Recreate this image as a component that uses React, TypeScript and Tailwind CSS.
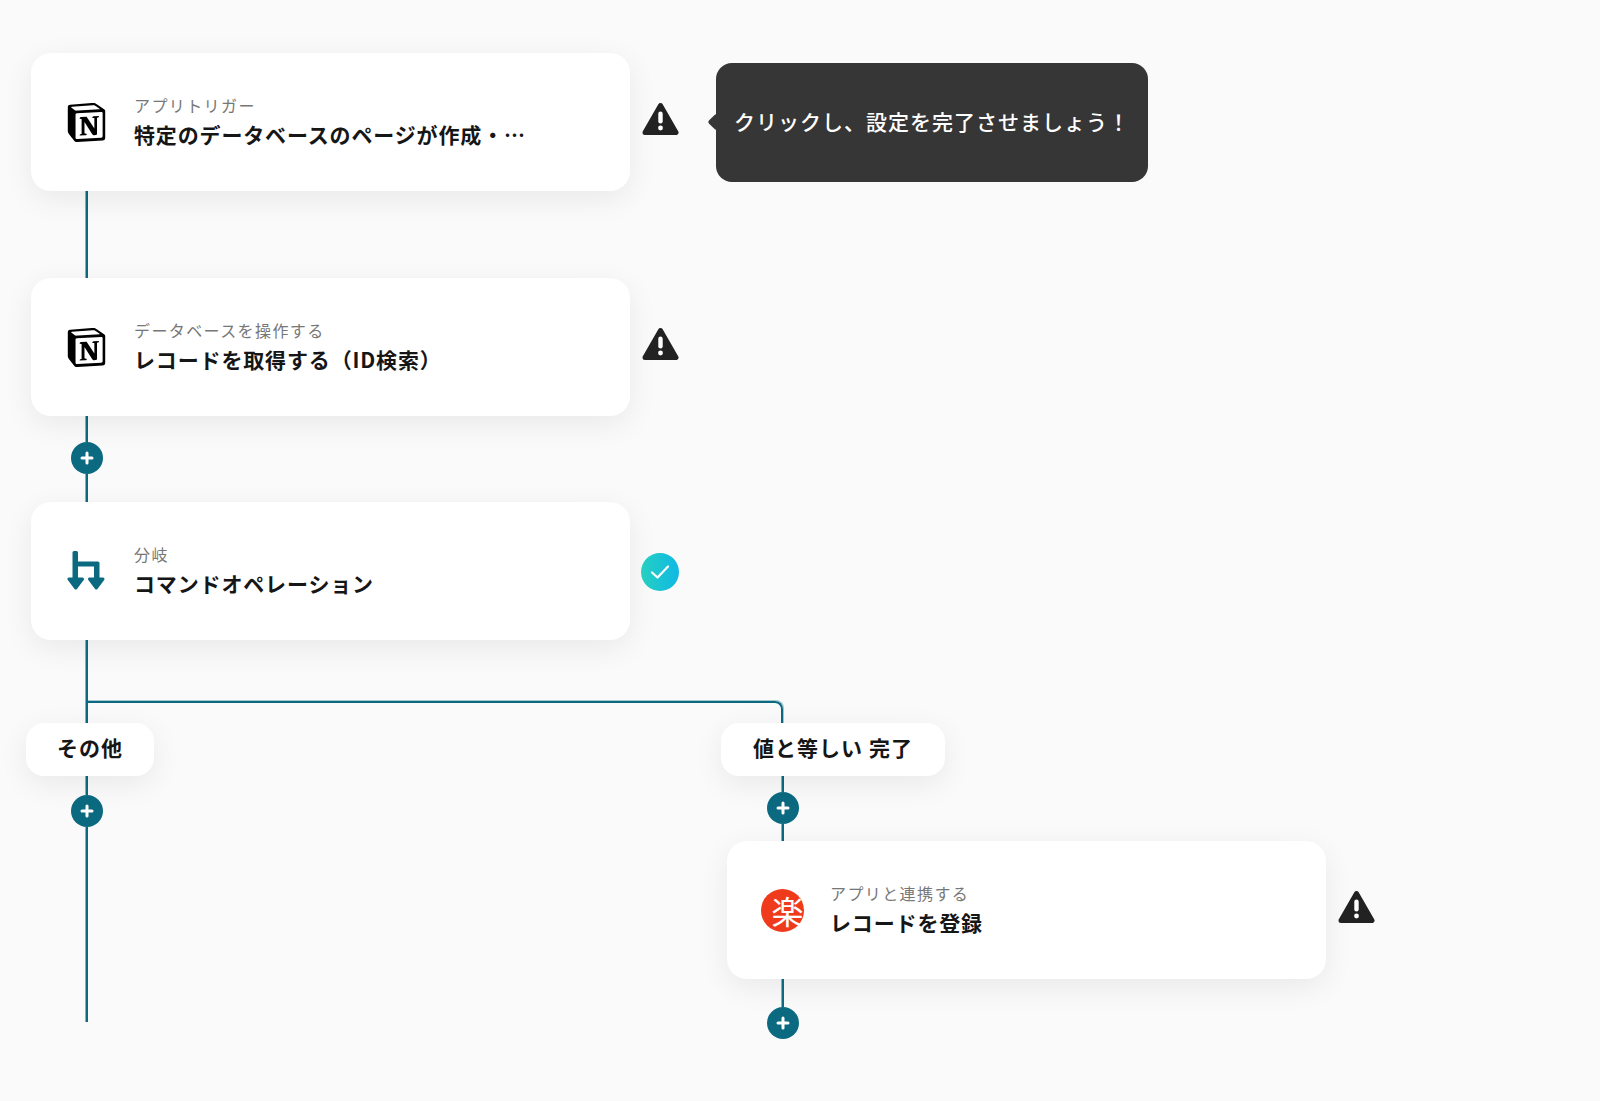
import { SiNotion } from "react-icons/si";

const font = { fontFamily: '"Noto Sans CJK JP", "Noto Sans", sans-serif' };

function Warn() {
  return (
    <svg width="37" height="34" viewBox="0 0 37 34" className="block">
      <path d="M18.5 3.5 L34 30.5 L3 30.5 Z" fill="#222222" stroke="#222222" strokeWidth="5" strokeLinejoin="round" />
      <rect x="16.3" y="9.5" width="4.4" height="12" rx="2.2" fill="#ffffff" />
      <circle cx="18.5" cy="26" r="2.4" fill="#ffffff" />
    </svg>
  );
}

function Plus() {
  return (
    <div className="ml-[40px] flex h-[32px] w-[32px] items-center justify-center rounded-full bg-[#0b6a80]">
      <svg width="14" height="14" viewBox="0 0 14 14">
        <path d="M7 2 V12 M2 7 H12" stroke="#ffffff" strokeWidth="3" strokeLinecap="round" />
      </svg>
    </div>
  );
}

function Line({ h }: { h: string }) {
  return <div className={`ml-[55px] w-[2px] bg-[#0b6a80] shadow-[-1px_0_0_rgba(11,106,128,0.5)] ${h}`} />;
}

function BranchIcon() {
  return (
    <svg width="38" height="40" viewBox="0 0 38 40" className="block" fill="#0b6a80">
      <path d="M5.5 1.5 Q5.5 0 7 0 H9.5 Q11 0 11 1.5 V10.5 H31 Q32.5 10.5 32.5 12 V29 H27 V15.5 H11 V29 H5.5 Z" />
      <path d="M2 28 H15.5 L8.75 37 Z" stroke="#0b6a80" strokeWidth="3" strokeLinejoin="round" />
      <path d="M22.5 28 H36 L29.25 37 Z" stroke="#0b6a80" strokeWidth="3" strokeLinejoin="round" />
    </svg>
  );
}

function Notion() {
  return <SiNotion className="ml-[1px] block h-[39px] w-[39px] text-black" />;
}

function Rakuten() {
  return (
    <div className="ml-[1px] flex h-[43px] w-[43px] items-center justify-center rounded-full bg-[#f03a1c]">
      <span className="ml-[10px] text-[32px] leading-none text-white" style={font}>楽</span>
    </div>
  );
}

function Card({ icon, sub, title }: { icon: React.ReactNode; sub: string; title: string }) {
  return (
    <div className="flex h-[138px] w-[599px] shrink-0 items-center rounded-[20px] bg-white shadow-[0_8px_30px_rgba(0,0,0,0.07)]">
      <div className="flex w-[110px] shrink-0 justify-center">{icon}</div>
      <div className="-ml-[7px] flex flex-col pb-[3px]">
        <div className="text-[16px] leading-[24px] tracking-[1.4px] text-[#777777]">{sub}</div>
        <div className="mt-[2px] text-[21px] leading-[30px] font-semibold tracking-[0.85px] text-[#161616]">{title}</div>
      </div>
    </div>
  );
}

function Pill({ text, w }: { text: string; w: string }) {
  return (
    <div className={`relative z-10 flex h-[53px] items-center justify-center rounded-[18px] bg-white pb-[3px] text-[21px] font-semibold tracking-[1px] text-[#161616] shadow-[0_8px_30px_rgba(0,0,0,0.07)] ${w}`}>
      {text}
    </div>
  );
}

export default function App() {
  return (
    <div className="h-[1101px] w-full overflow-hidden bg-[#fafafa] pt-[53px] pl-[31px]" style={font}>
      <div className="flex items-start">
        <Card icon={<Notion />} sub="アプリトリガー" title="特定のデータベースのページが作成・…" />
        <div className="mt-[49px] ml-[12px]"><Warn /></div>
        <div className="relative mt-[10px] ml-[37px] flex h-[119px] w-[432px] items-center justify-center rounded-[16px] bg-[#363636] pb-[2px] text-[21px] font-medium tracking-[1px] text-white">
          <div className="absolute top-[53px] left-[-6px] h-[12px] w-[12px] rotate-45 rounded-[2px] bg-[#363636]" />
          クリックし、設定を完了させましょう！
        </div>
      </div>
      <Line h="h-[87px]" />
      <div className="flex items-start">
        <Card icon={<Notion />} sub="データベースを操作する" title="レコードを取得する（ID検索）" />
        <div className="mt-[49px] ml-[12px]"><Warn /></div>
      </div>
      <Line h="h-[26px]" />
      <Plus />
      <Line h="h-[28px]" />
      <div className="flex items-start">
        <Card icon={<BranchIcon />} sub="分岐" title="コマンドオペレーション" />
        <div className="mt-[51px] ml-[11px] flex h-[38px] w-[38px] items-center justify-center rounded-full bg-gradient-to-r from-[#26d0c0] to-[#12b8e4]">
          <svg width="20" height="16" viewBox="0 0 20 16">
            <path d="M2 8.5 L7.5 13.5 L18 2.5" fill="none" stroke="#ffffff" strokeWidth="2.2" strokeLinecap="round" strokeLinejoin="round" />
          </svg>
        </div>
      </div>
      <div className="relative flex items-start">
        <div className="absolute top-[61px] left-[56px] h-[24px] w-[696px] rounded-tr-[8px] border-t-2 border-r-2 border-[#0b6a80] shadow-[1px_-1px_0_rgba(11,106,128,0.35)]" />
        <div className="flex w-[696px] shrink-0 flex-col">
          <Line h="h-[83px]" />
          <div className="-ml-[5px]"><Pill text="その他" w="w-[128px]" /></div>
          <Line h="h-[19px]" />
          <Plus />
          <Line h="h-[195px]" />
        </div>
        <div className="flex flex-col pt-[83px]">
          <div className="-ml-[6px]"><Pill text="値と等しい 完了" w="w-[224px]" /></div>
          <Line h="h-[16px]" />
          <Plus />
          <Line h="h-[17px]" />
          <div className="flex items-start">
            <Card icon={<Rakuten />} sub="アプリと連携する" title="レコードを登録" />
            <div className="mt-[49px] ml-[12px]"><Warn /></div>
          </div>
          <Line h="h-[28px]" />
          <Plus />
        </div>
      </div>
    </div>
  );
}
